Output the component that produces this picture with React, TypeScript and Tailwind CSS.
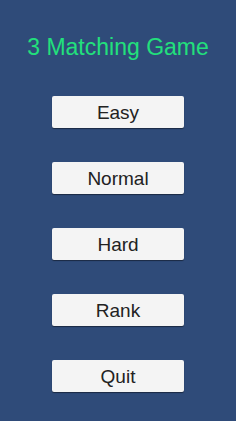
export default function App() {
  const buttons = ["Easy", "Normal", "Hard", "Rank", "Quit"];

  return (
    <div
      className="w-[236px] h-[421px] bg-[#2f4b79] flex flex-col items-center overflow-hidden"
      style={{ fontFamily: '"Liberation Sans", Arial, sans-serif' }}
    >
      <h1 className="mt-[34px] text-[23px] leading-[27px] text-[#22e07c] whitespace-nowrap">
        3 Matching Game
      </h1>
      <div className="mt-[35px] flex flex-col gap-[34px]">
        {buttons.map((label) => (
          <button
            key={label}
            className="w-[132px] h-[32px] bg-[#f4f4f4] text-[#222222] text-[19px] leading-none rounded-[2px] shadow-[0_1px_1px_rgba(0,0,0,0.45)]"
          >
            {label}
          </button>
        ))}
      </div>
    </div>
  );
}
